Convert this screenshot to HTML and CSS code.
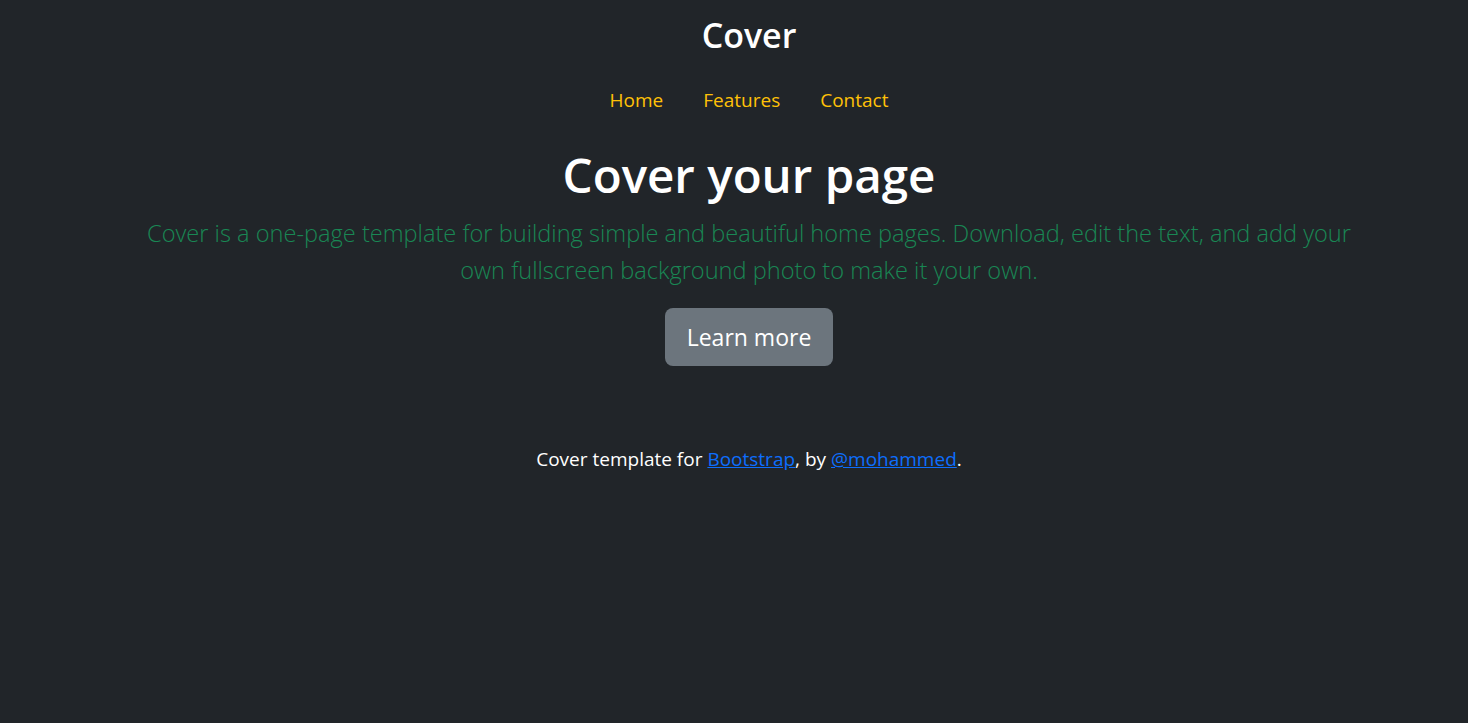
FILE: index.html
```html
<!DOCTYPE html>
<html lang="en">
<head>
<meta charset="utf-8">
<title>Cover</title>
<link rel="stylesheet" href="styles.css">
</head>
<body>
<div class="cover">
  <header class="masthead">
    <h3 class="brand">Cover</h3>
    <nav class="nav">
      <a class="nav-link" href="#">Home</a>
      <a class="nav-link" href="#">Features</a>
      <a class="nav-link" href="#">Contact</a>
    </nav>
  </header>
  <main class="hero">
    <h1 class="title">Cover your page</h1>
    <p class="lead">Cover is a one-page template for building simple and beautiful home pages. Download, edit the text, and add your own fullscreen background photo to make it your own.</p>
    <a class="btn" href="#">Learn more</a>
  </main>
  <footer class="foot">
    <p>Cover template for <a href="#">Bootstrap</a>, by <a href="#">@mohammed</a>.</p>
  </footer>
</div>
</body>
</html>
```
FILE: styles.css
```css
html, body {
  margin: 0;
  padding: 0;
  background: #212529;
  height: 100%;
}
body {
  font-family: "Open Sans", "Noto Sans", sans-serif;
  color: #fff;
}
.cover {
  display: flex;
  flex-direction: column;
  align-items: center;
  text-align: center;
  padding-top: 13px;
  padding-left: 30px;
}
.brand {
  margin: 0;
  font-size: 34px;
  font-weight: 600;
  line-height: 44px;
}
.nav {
  display: flex;
  justify-content: center;
  gap: 40px;
  margin-top: 29px;
}
.nav-link {
  color: #ffc107;
  text-decoration: none;
  font-size: 19px;
  line-height: 28px;
}
.hero {
  margin-top: 31px;
  max-width: 1230px;
  display: flex;
  flex-direction: column;
  align-items: center;
}
.title {
  margin: 0;
  font-size: 47.5px;
  font-weight: 600;
  line-height: 60px;
}
.lead {
  margin: 10px 0 0;
  color: #198754;
  font-size: 23.6px;
  font-weight: 300;
  line-height: 37px;
}
.btn {
  margin-top: 19px;
  display: inline-block;
  background: #6c757d;
  color: #fff;
  text-decoration: none;
  font-size: 23px;
  line-height: 34px;
  padding: 12px 22px;
  border-radius: 8px;
}
.foot {
  margin-top: 80px;
  font-size: 19px;
  line-height: 26px;
}
.foot p { margin: 0; }
.foot a { color: #0d6efd; }
```
